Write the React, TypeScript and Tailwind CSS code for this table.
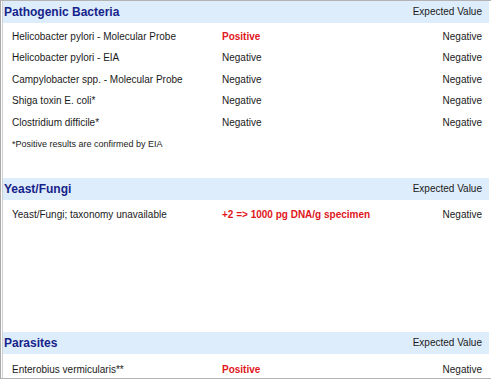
const font = { fontFamily: '"Liberation Sans", Arial, sans-serif' };

type Row = { name: string; result: string; positive?: boolean; expected: string };

const bacteria: Row[] = [
  { name: "Helicobacter pylori - Molecular Probe", result: "Positive", positive: true, expected: "Negative" },
  { name: "Helicobacter pylori - EIA", result: "Negative", expected: "Negative" },
  { name: "Campylobacter spp. - Molecular Probe", result: "Negative", expected: "Negative" },
  { name: "Shiga toxin E. coli*", result: "Negative", expected: "Negative" },
  { name: "Clostridium difficile*", result: "Negative", expected: "Negative" },
];

const fungi: Row[] = [
  { name: "Yeast/Fungi; taxonomy unavailable", result: "+2 => 1000 pg DNA/g specimen", positive: true, expected: "Negative" },
];

const parasites: Row[] = [
  { name: "Enterobius vermicularis**", result: "Positive", positive: true, expected: "Negative" },
];

function Header({ title }: { title: string }) {
  return (
    <div className="h-[22px] bg-[#deedfb] flex items-center justify-between pl-[1px] pr-[7px]">
      <span className="text-[12px] font-bold text-[#16238a] leading-none">{title}</span>
      <span className="text-[10px] text-[#1a1a1a] leading-none">Expected Value</span>
    </div>
  );
}

function ResultRow({ row }: { row: Row }) {
  return (
    <div className="h-[21.5px] flex items-center text-[10px] text-[#1a1a1a] leading-none pr-[7px]">
      <span className="w-[219px] pl-[9px] shrink-0">{row.name}</span>
      <span className={row.positive ? "text-[#e0161b] font-bold" : ""}>{row.result}</span>
      <span className="ml-auto">{row.expected}</span>
    </div>
  );
}

export default function App() {
  return (
    <div className="w-[491px] h-[380px] bg-white overflow-hidden" style={font}>
      <div className="h-[379px] border-t border-b border-[#b4b4b4] border-l border-l-[#a8a8a8] pl-[1px] pr-[2px]">
        <div className="h-full border-l border-[#cfcfcf]">
          <section className="h-[177px] flex flex-col">
            <Header title="Pathogenic Bacteria" />
            <div className="mt-[3px]">
              {bacteria.map((r) => (
                <ResultRow key={r.name} row={r} />
              ))}
            </div>
            <div className="h-[21px] flex items-center pl-[9px] text-[9px] text-[#1a1a1a] leading-none">
              *Positive results are confirmed by EIA
            </div>
          </section>

          <section className="h-[154px] flex flex-col">
            <Header title="Yeast/Fungi" />
            <div className="mt-[4px]">
              {fungi.map((r) => (
                <ResultRow key={r.name} row={r} />
              ))}
            </div>
          </section>

          <section className="flex flex-col">
            <Header title="Parasites" />
            <div className="mt-[5px]">
              {parasites.map((r) => (
                <ResultRow key={r.name} row={r} />
              ))}
            </div>
          </section>
        </div>
      </div>
    </div>
  );
}
